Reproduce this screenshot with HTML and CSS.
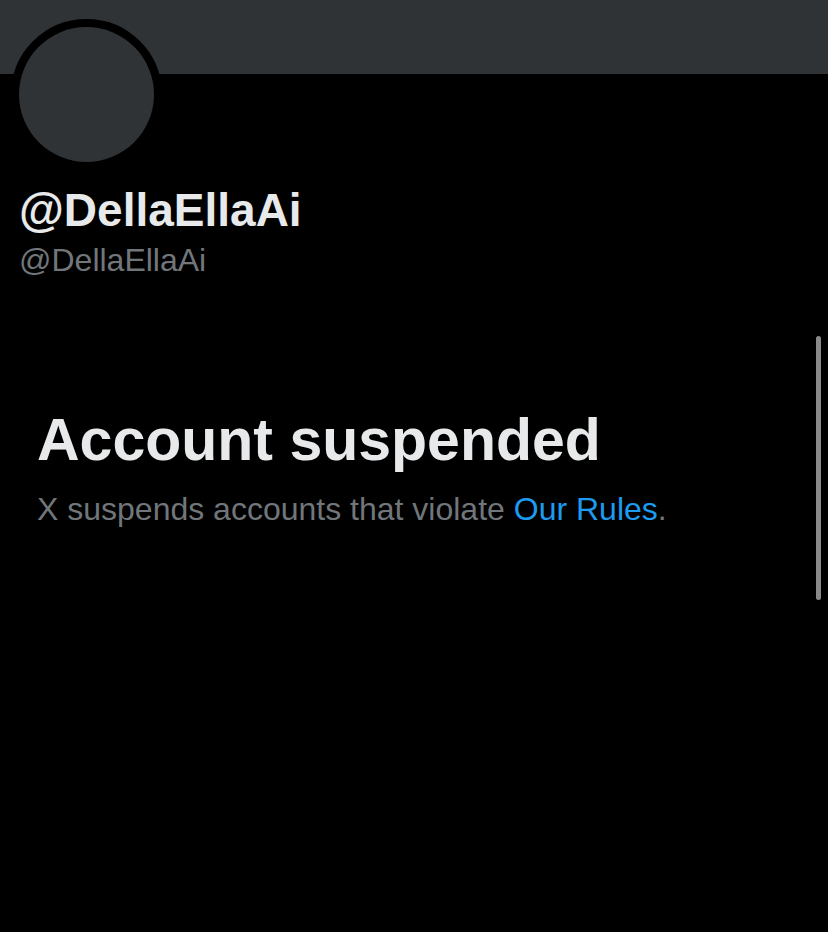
FILE: index.html
```html
<!DOCTYPE html>
<html>
<head>
<meta charset="utf-8">
<link rel="stylesheet" href="styles.css">
</head>
<body>
<div class="page">
  <div class="banner"></div>
  <div class="profile">
    <div class="avatar"><div class="avatar-inner"></div></div>
    <div class="name">@DellaEllaAi</div>
    <div class="handle">@DellaEllaAi</div>
  </div>
  <div class="notice">
    <h1 class="title">Account suspended</h1>
    <p class="desc">X suspends accounts that violate <span class="link">Our Rules</span>.</p>
  </div>
  <div class="scrollbar"></div>
</div>
</body>
</html>
```
FILE: styles.css
```css
html, body {
  margin: 0;
  padding: 0;
  background: #000;
}
.page {
  position: relative;
  width: 828px;
  height: 932px;
  overflow: hidden;
  background: #000;
  font-family: "Liberation Sans", Arial, sans-serif;
}
.banner {
  height: 74px;
  background: #2f3336;
}
.profile {
  padding-left: 19px;
}
.avatar {
  width: 135px;
  height: 135px;
  border: 8px solid #000;
  border-radius: 50%;
  margin-top: -55px;
  margin-left: -8px;
  background: #000;
}
.avatar-inner {
  width: 135px;
  height: 135px;
  border-radius: 50%;
  background: #2f3336;
}
.name {
  margin-top: 13px;
  font-size: 46px;
  font-weight: bold;
  line-height: 54px;
  color: #e7e9ea;
}
.handle {
  margin-top: 4px;
  font-size: 32px;
  line-height: 38px;
  color: #71767b;
}
.notice {
  padding-left: 37px;
  margin-top: 128px;
}
.title {
  margin: 0;
  font-size: 59px;
  line-height: 66px;
  font-weight: bold;
  color: #e7e9ea;
  letter-spacing: 0;
}
.desc {
  margin: 17px 0 0 0;
  font-size: 32px;
  line-height: 38px;
  color: #71767b;
}
.link {
  color: #1d9bf0;
}
.scrollbar {
  position: absolute;
  left: 816px;
  top: 336px;
  width: 5px;
  height: 264px;
  border-radius: 3px;
  background: #8a8a8a;
}
```
